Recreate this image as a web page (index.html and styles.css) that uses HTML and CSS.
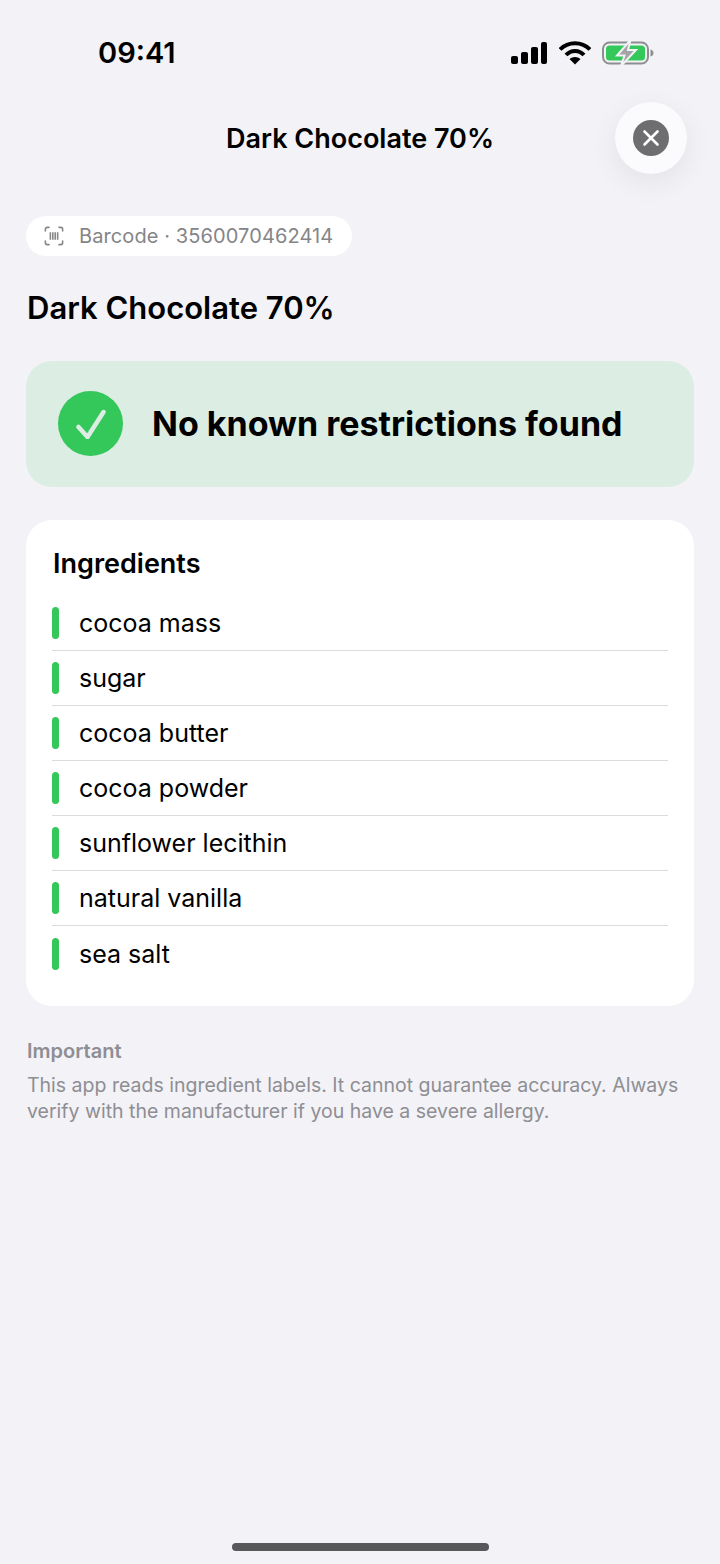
FILE: index.html
```html
<!DOCTYPE html>
<html lang="en">
<head>
    <meta charset="UTF-8">
    <meta name="viewport" content="width=device-width, initial-scale=1.0">
    <title>Dark Chocolate 70%</title>
    <link rel="stylesheet" href="styles.css">
</head>
<body>
<div class="screen">
    <div class="status-bar">
        <span class="time">09:41</span>
        <div class="status-icons">
            <svg width="38" height="24" viewBox="0 0 38 24"><rect x="1" y="15" width="7" height="8" rx="2"/><rect x="11" y="11" width="7" height="12" rx="2"/><rect x="21" y="6" width="7" height="17" rx="2"/><rect x="31" y="1" width="6" height="22" rx="2"/></svg>
            <svg width="32" height="24" viewBox="0 0 32 24"><path d="M1 8.500 C9 0 23 0 31 8.500" class="wifi"/><path d="M7 14 C12 8.500 20 8.500 25 14" class="wifi"/><path d="M16 23.500 L10.500 18 C13.500 15.200 18.500 15.200 21.500 18 Z"/></svg>
            <svg width="52" height="24" viewBox="0 0 52 24"><rect x="1" y="1.500" width="45" height="21" rx="6.500" fill="none" stroke="#8e8e90" stroke-width="2"/><rect x="4" y="4.500" width="39" height="15" rx="3.500" fill="#34c759"/><path d="M48.500 8.500 C50.500 9 51.500 10.500 51.500 12 C51.500 13.500 50.500 15 48.500 15.500 Z" fill="#8e8e90"/><path d="M28.500 -1 L15 14.500 H22.500 L19 25 L34 9 H26 Z" fill="#a4a4a6" stroke="#f2f2f7" stroke-width="2"/></svg>
        </div>
    </div>

    <header class="nav">
        <h2 class="nav-title">Dark Chocolate 70%</h2>
        <button class="close-btn" type="button">
            <span class="close-circle">
                <svg width="18" height="18" viewBox="0 0 18 18"><path d="M2.500 2.500 L15.500 15.500 M15.500 2.500 L2.500 15.500" stroke="#fff" stroke-width="2.600" stroke-linecap="round"/></svg>
            </span>
        </button>
    </header>

    <main class="content">
        <div class="barcode-pill">
            <svg width="20" height="20" viewBox="0 0 22 22" fill="none" stroke="#858588" stroke-width="1.700" stroke-linecap="round">
                <path d="M1.500 5.500 V3.500 A2 2 0 0 1 3.500 1.500 H5.500 M16.500 1.500 H18.500 A2 2 0 0 1 20.500 3.500 V5.500 M20.500 16.500 V18.500 A2 2 0 0 1 18.500 20.500 H16.500 M5.500 20.500 H3.500 A2 2 0 0 1 1.500 18.500 V16.500"/>
                <path d="M7 7 V15 M9.700 7 V15 M12.300 7 V15 M15 7 V15" stroke-linecap="butt"/>
            </svg>
            <span>Barcode · 3560070462414</span>
        </div>

        <h1 class="product-name">Dark Chocolate 70%</h1>

        <section class="result-banner">
            <span class="check-circle">
                <svg width="30" height="30" viewBox="0 0 30 30" fill="none"><path d="M2.500 18 L11.500 28 L27.500 3" stroke="#dcede4" stroke-width="4.500" stroke-linecap="round" stroke-linejoin="round"/></svg>
            </span>
            <p class="result-text">No known restrictions found</p>
        </section>

        <section class="card">
            <h3 class="card-title">Ingredients</h3>
            <ul class="ingredients">
                <li><span class="bar"></span><span class="name">cocoa mass</span></li>
                <li><span class="bar"></span><span class="name">sugar</span></li>
                <li><span class="bar"></span><span class="name">cocoa butter</span></li>
                <li><span class="bar"></span><span class="name">cocoa powder</span></li>
                <li><span class="bar"></span><span class="name">sunflower lecithin</span></li>
                <li><span class="bar"></span><span class="name">natural vanilla</span></li>
                <li><span class="bar"></span><span class="name">sea salt</span></li>
            </ul>
        </section>

        <section class="note">
            <h4>Important</h4>
            <p>This app reads ingredient labels. It cannot guarantee accuracy. Always verify with the manufacturer if you have a severe allergy.</p>
        </section>
    </main>

    <div class="home-indicator"></div>
</div>
</body>
</html>
```
FILE: styles.css
```css
* {
    box-sizing: border-box;
}
body {
    margin: 0;
    background-color: #f2f2f7;
    color: #000;
    font-family: Inter, "Liberation Sans", sans-serif;
}
.screen {
    position: relative;
    height: 1564px;
    overflow: hidden;
}
.status-bar {
    height: 102px;
    padding: 34px 66px 0 98px;
    display: flex;
    justify-content: space-between;
    align-items: flex-start;
}
.time {
    font-size: 29px;
    line-height: 38px;
    font-weight: 600;
}
.status-icons {
    display: flex;
    align-items: center;
    gap: 11px;
    margin-top: 7px;
}
.wifi {
    fill: none;
    stroke: #000;
    stroke-width: 4;
}
.nav {
    position: relative;
    height: 72px;
    display: flex;
    justify-content: center;
    align-items: center;
}
.nav-title {
    margin: 0;
    font-size: 27px;
    font-weight: 600;
}
.close-btn {
    position: absolute;
    top: 0;
    left: 615px;
    width: 72px;
    height: 72px;
    padding: 0;
    border: none;
    border-radius: 50%;
    background: #fbfbfd;
    box-shadow: 0 8px 30px rgba(0, 0, 0, 0.07);
    display: flex;
    justify-content: center;
    align-items: center;
}
.close-circle {
    width: 36px;
    height: 36px;
    border-radius: 50%;
    background: #6e6e70;
    display: flex;
    justify-content: center;
    align-items: center;
}
.content {
    padding: 42px 26px 0;
}
.barcode-pill {
    width: 326px;
    height: 40px;
    padding-left: 18px;
    border-radius: 20px;
    background: #fff;
    display: flex;
    align-items: center;
    gap: 15px;
    font-size: 20px;
    letter-spacing: 0.1px;
    color: #858588;
}
.product-name {
    margin: 30px 0 0;
    padding-left: 1px;
    font-size: 31px;
    line-height: 44px;
    font-weight: 600;
}
.result-banner {
    margin-top: 31px;
    height: 126px;
    padding: 0 0 1px 32px;
    border-radius: 26px;
    background: #dcede4;
    display: flex;
    align-items: center;
    gap: 29px;
}
.check-circle {
    width: 65px;
    height: 65px;
    border-radius: 50%;
    background: #34c759;
    display: flex;
    justify-content: center;
    align-items: center;
}
.result-text {
    margin: 0 0 1px;
    font-size: 34px;
    font-weight: 700;
}
.card {
    margin-top: 33px;
    height: 486px;
    padding: 27px 26px 0;
    border-radius: 26px;
    background: #fff;
}
.card-title {
    margin: 0 0 15px 1px;
    font-size: 27px;
    line-height: 34px;
    font-weight: 600;
}
.ingredients {
    margin: 0;
    padding: 0;
    list-style: none;
}
.ingredients li {
    height: 55px;
    display: flex;
    align-items: center;
    gap: 20px;
    border-bottom: 1px solid #dcdcde;
    font-size: 25px;
}
.ingredients li:last-child {
    border-bottom: none;
}
.bar {
    width: 7px;
    height: 32px;
    border-radius: 4px;
    background: #34c759;
}
.note {
    margin-top: 32px;
    padding-left: 1px;
    font-size: 19.5px;
    line-height: 26px;
    color: #8e8e93;
}
.note h4 {
    margin: 0 0 8px;
    font-size: 20px;
    font-weight: 600;
}
.note p {
    margin: 0;
}
.home-indicator {
    position: absolute;
    left: 232px;
    bottom: 13px;
    width: 257px;
    height: 8px;
    border-radius: 4px;
    background: #58585a;
}
```
